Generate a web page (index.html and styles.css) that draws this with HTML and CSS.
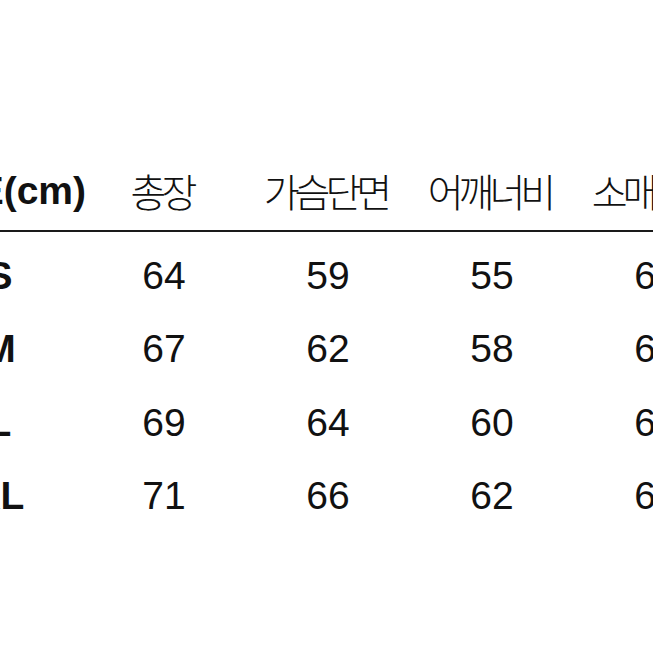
FILE: index.html
```html
<!DOCTYPE html>
<html lang="ko">
<head>
<meta charset="utf-8">
<title>사이즈 표</title>
<link rel="stylesheet" href="styles.css">
</head>
<body>
<div class="page">
  <div class="chart">
    <div class="row head">
      <div class="cell size">SIZE(cm)</div>
      <div class="cell ko">총장</div>
      <div class="cell ko">가슴단면</div>
      <div class="cell ko">어깨너비</div>
      <div class="cell ko">소매길이</div>
    </div>
    <div class="rule"></div>
    <div class="body">
      <div class="row">
        <div class="cell size">S</div>
        <div class="cell">64</div>
        <div class="cell">59</div>
        <div class="cell">55</div>
        <div class="cell">61</div>
      </div>
      <div class="row">
        <div class="cell size">M</div>
        <div class="cell">67</div>
        <div class="cell">62</div>
        <div class="cell">58</div>
        <div class="cell">62</div>
      </div>
      <div class="row">
        <div class="cell size">L</div>
        <div class="cell">69</div>
        <div class="cell">64</div>
        <div class="cell">60</div>
        <div class="cell">63</div>
      </div>
      <div class="row">
        <div class="cell size">XL</div>
        <div class="cell">71</div>
        <div class="cell">66</div>
        <div class="cell">62</div>
        <div class="cell">64</div>
      </div>
    </div>
  </div>
</div>
</body>
</html>
```
FILE: styles.css
```css
html, body {
  margin: 0;
  padding: 0;
  background: #ffffff;
}
body {
  width: 653px;
  height: 653px;
  overflow: hidden;
  font-family: "Liberation Sans", Arial, "Noto Sans CJK KR", sans-serif;
  color: #111111;
}
.page {
  padding-top: 150px;
}
.chart {
  margin-left: -83px;
  width: 900px;
}
.row {
  display: grid;
  grid-template-columns: 165px 164px 164px 164px 164px;
  height: 73.33px;
  align-items: center;
}
.row.head {
  height: 80px;
}
.cell {
  text-align: center;
  font-size: 39px;
  line-height: 73px;
  white-space: nowrap;
}
.cell.size {
  font-weight: bold;
}
.head .cell.size {
  font-size: 39px;
}
.cell.ko {
  font-family: "Noto Sans CJK KR", sans-serif;
  font-weight: 300;
  font-size: 39px;
  letter-spacing: -5px;
  padding-right: 5px;
  line-height: 80px;
}
.rule {
  height: 2px;
  background: #1a1a1a;
  margin-left: 83px;
}
.body {
  padding-top: 7px;
}
```
